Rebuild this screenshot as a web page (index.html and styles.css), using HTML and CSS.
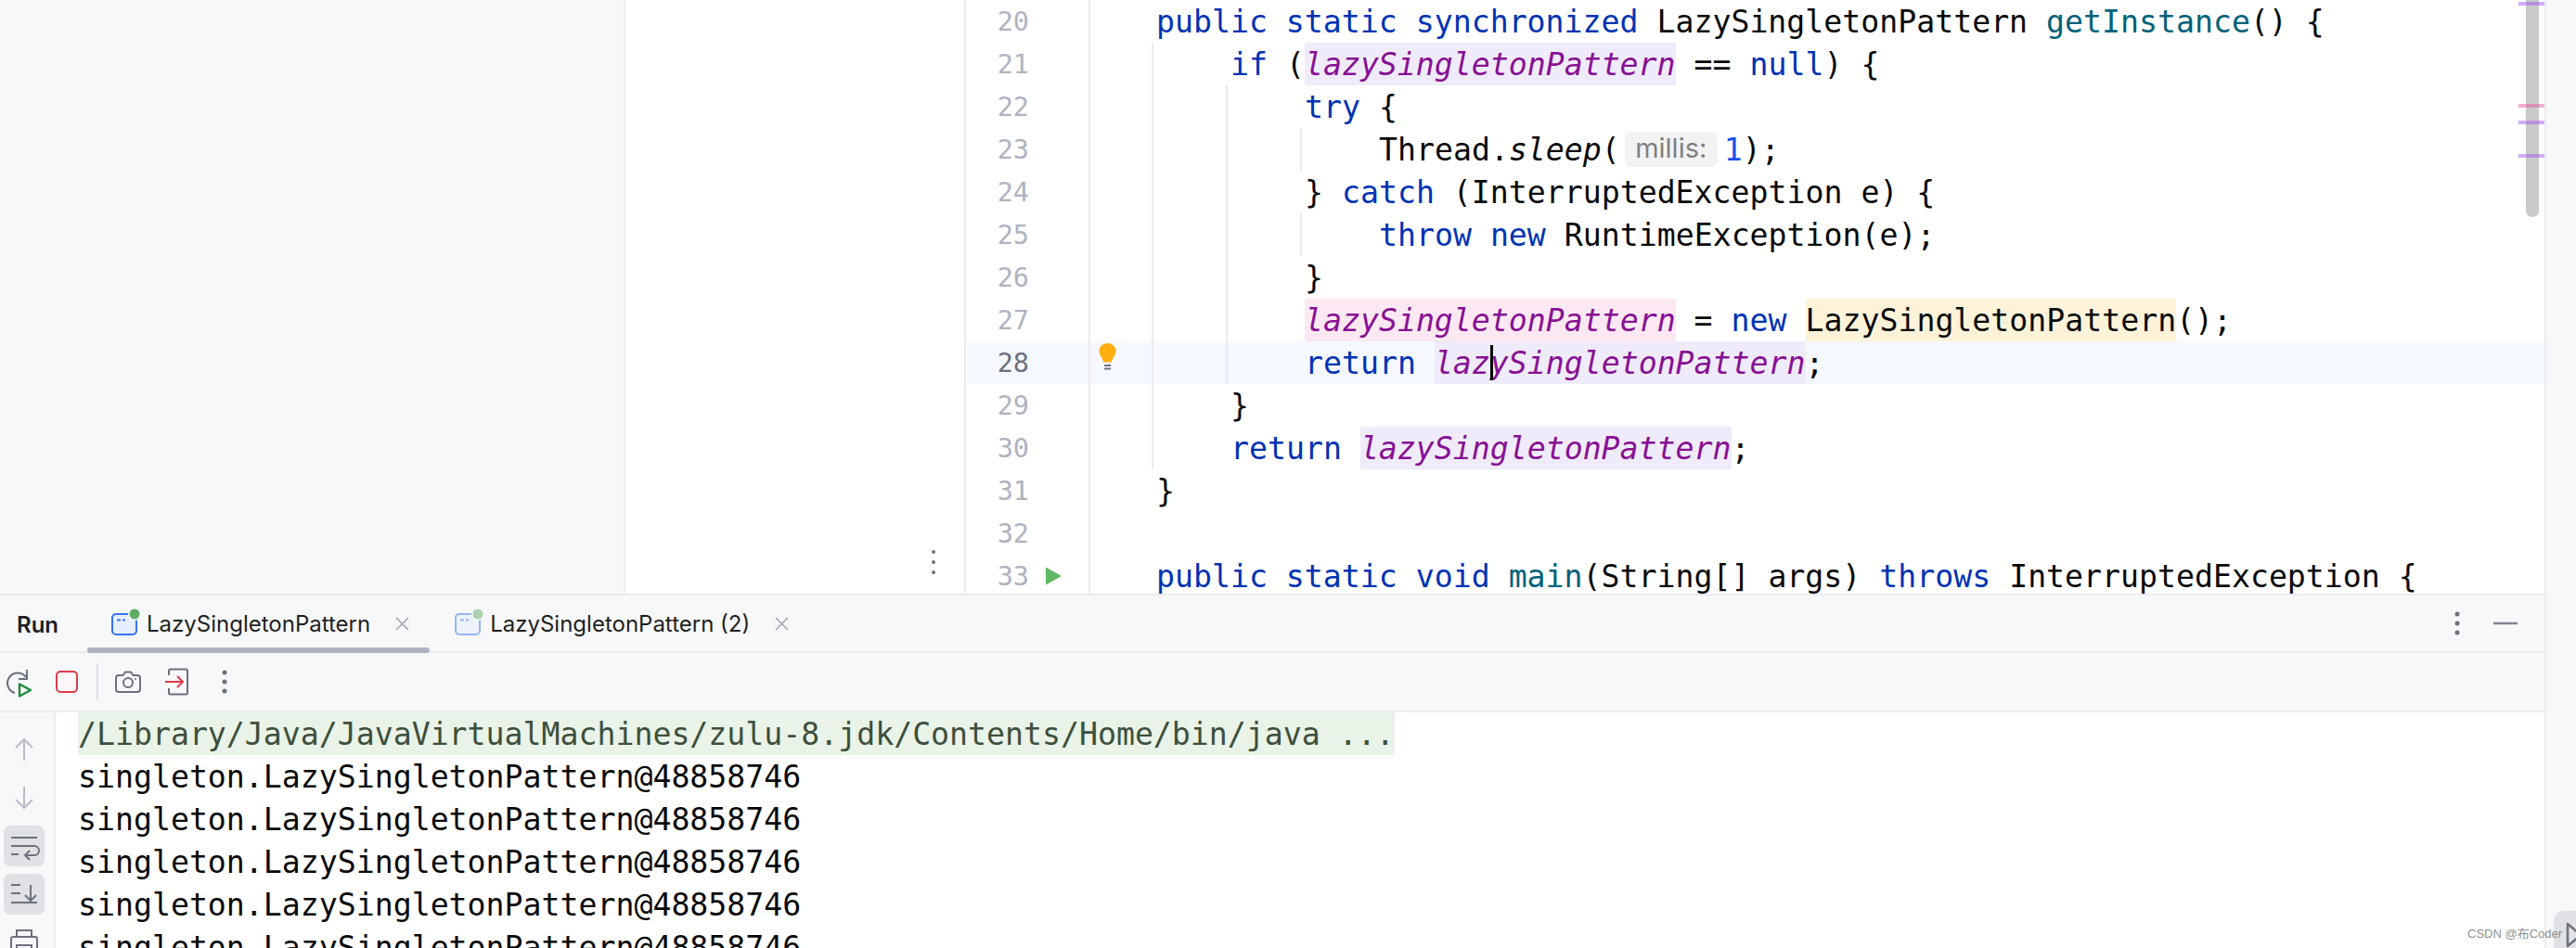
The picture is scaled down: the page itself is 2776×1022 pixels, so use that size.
FILE: index.html
```html
<!DOCTYPE html>
<html lang="en">
<head>
<meta charset="utf-8">
<title>LazySingletonPattern</title>
<link rel="stylesheet" href="styles.css">
</head>
<body>
<div class="workspace">
  <div class="top">
    <aside class="sidebar"></aside>
    <div class="structure">
      <svg class="more-dots" width="6" height="30" viewBox="0 0 6 30"><circle cx="3" cy="3" r="2" /><circle cx="3" cy="14" r="2" /><circle cx="3" cy="25" r="2" /></svg>
    </div>
    <main class="editor">
      <div class="row"><span class="ln">20</span><span class="runcell"></span><span class="fold"></span><span class="code"><b class="k">public static synchronized</b> LazySingletonPattern <span class="m">getInstance</span>() {</span></div>
      <div class="row"><span class="ln">21</span><span class="runcell"></span><span class="fold"></span><span class="code"><i class="g"></i><b class="k">if</b> (<span class="f hl-read">lazySingletonPattern</span> == <b class="k">null</b>) {</span></div>
      <div class="row"><span class="ln">22</span><span class="runcell"></span><span class="fold"></span><span class="code"><i class="g"></i><i class="g"></i><b class="k">try</b> {</span></div>
      <div class="row"><span class="ln">23</span><span class="runcell"></span><span class="fold"></span><span class="code"><i class="g"></i><i class="g"></i><i class="g"></i>Thread.<em>sleep</em>(<span class="inlay">millis:</span><span class="n">1</span>);</span></div>
      <div class="row"><span class="ln">24</span><span class="runcell"></span><span class="fold"></span><span class="code"><i class="g"></i><i class="g"></i>} <b class="k">catch</b> (InterruptedException e) {</span></div>
      <div class="row"><span class="ln">25</span><span class="runcell"></span><span class="fold"></span><span class="code"><i class="g"></i><i class="g"></i><i class="g"></i><b class="k">throw new</b> RuntimeException(e);</span></div>
      <div class="row"><span class="ln">26</span><span class="runcell"></span><span class="fold"></span><span class="code"><i class="g"></i><i class="g"></i>}</span></div>
      <div class="row"><span class="ln">27</span><span class="runcell"></span><span class="fold"></span><span class="code"><i class="g"></i><i class="g"></i><span class="f hl-write">lazySingletonPattern</span> = <b class="k">new</b> <span class="hl-ctor">LazySingletonPattern</span>();</span></div>
      <div class="row current"><span class="ln">28</span><span class="runcell"></span><span class="fold"><svg width="20" height="30" viewBox="0 0 20 30"><path class="bulb" d="M9.500 1C4.500 1 .5 5 .5 9.500c0 4.500 3.500 6.500 4.500 12h9c1-5.500 4.500-7.500 4.500-12C18.500 5 14.500 1 9.500 1z"/><path class="bulb-base" d="M6 25h7M6 28.500h7"/></svg></span><span class="code"><i class="g"></i><i class="g"></i><b class="k">return</b> <span class="f hl-read caret-host">lazySingletonPattern<span class="caret"></span></span>;</span></div>
      <div class="row"><span class="ln">29</span><span class="runcell"></span><span class="fold"></span><span class="code"><i class="g"></i>}</span></div>
      <div class="row"><span class="ln">30</span><span class="runcell"></span><span class="fold"></span><span class="code"><i class="g"></i><b class="k">return</b> <span class="f hl-read">lazySingletonPattern</span>;</span></div>
      <div class="row"><span class="ln">31</span><span class="runcell"></span><span class="fold"></span><span class="code">}</span></div>
      <div class="row"><span class="ln">32</span><span class="runcell"></span><span class="fold"></span><span class="code"></span></div>
      <div class="row"><span class="ln">33</span><span class="runcell"><svg width="20" height="22" viewBox="0 0 20 22"><path class="play" d="M1 1.500L18 11 1 20.500z"/></svg></span><span class="fold"></span><span class="code"><b class="k">public static void</b> <span class="m">main</span>(String[] args) <b class="k">throws</b> InterruptedException {</span></div>
    </main>
  </div>
  <section class="run">
    <header class="tabs">
      <span class="run-title">Run</span>
      <div class="tab active">
        <svg class="tab-icon" width="32" height="32" viewBox="0 0 32 32"><rect x="1" y="7" width="26" height="22" rx="4"/><path d="M6 13.500h4M12 13.500h3"/><circle class="halo" cx="25" cy="7" r="7"/><circle class="dot" cx="25" cy="7" r="5.500"/></svg>
        <span class="tab-label">LazySingletonPattern</span>
        <svg class="close" width="15" height="15" viewBox="0 0 15 15"><path d="M1 1l13 13M14 1L1 14"/></svg>
      </div>
      <div class="tab inactive">
        <svg class="tab-icon" width="32" height="32" viewBox="0 0 32 32"><rect x="1" y="7" width="26" height="22" rx="4"/><path d="M6 13.500h4M12 13.500h3"/><circle class="halo" cx="25" cy="7" r="7"/><circle class="dot" cx="25" cy="7" r="5.500"/></svg>
        <span class="tab-label">LazySingletonPattern (2)</span>
        <svg class="close" width="15" height="15" viewBox="0 0 15 15"><path d="M1 1l13 13M14 1L1 14"/></svg>
      </div>
      <div class="tab-actions">
        <svg width="10" height="30" viewBox="0 0 10 30"><circle class="solid" cx="5" cy="5" r="2.500"/><circle class="solid" cx="5" cy="15" r="2.500"/><circle class="solid" cx="5" cy="25" r="2.500"/></svg>
        <svg width="26" height="30" viewBox="0 0 26 30"><path class="line" d="M0 15h26"/></svg>
      </div>
    </header>
    <div class="toolbar">
      <svg class="tool" viewBox="0 0 40 40"><path class="gray" d="M28 15A11 11 0 1 0 16 32M29 7v10h-9"/><path class="green" d="M21 22.500l12 6.500-12 6.500z"/></svg>
      <svg class="tool" viewBox="0 0 40 40"><rect class="red-fill" x="9" y="9" width="22" height="22" rx="4"/></svg>
      <span class="sep"></span>
      <svg class="tool" viewBox="0 0 40 40"><path class="gray" d="M10 13h4.500l2.500-3.500h6l2.500 3.500H30a3 3 0 0 1 3 3v12a3 3 0 0 1-3 3H10a3 3 0 0 1-3-3V16a3 3 0 0 1 3-3z"/><circle class="gray" cx="20" cy="21" r="5"/><circle class="solid" cx="28" cy="17" r="1"/></svg>
      <svg class="tool" viewBox="0 0 40 40"><path class="gray" d="M12 13V8a1.500 1.500 0 0 1 1.500-1.500h17A1.500 1.500 0 0 1 32 8v24a1.500 1.500 0 0 1-1.500 1.500h-17A1.500 1.500 0 0 1 12 32v-5"/><path class="red" d="M8 20h19M21 14l6 6-6 6"/></svg>
      <svg class="tool" viewBox="0 0 40 40"><circle class="solid" cx="20" cy="10" r="2.500"/><circle class="solid" cx="20" cy="20" r="2.500"/><circle class="solid" cx="20" cy="30" r="2.500"/></svg>
    </div>
    <div class="console-wrap">
      <nav class="strip">
        <svg class="strip-btn" viewBox="0 0 44 44"><path class="light" d="M22 34V12M13 20l9-9 9 9"/></svg>
        <svg class="strip-btn" viewBox="0 0 44 44"><path class="light" d="M22 10v22M13 24l9 9 9-9"/></svg>
        <svg class="strip-btn on" viewBox="0 0 44 44"><path class="gray" d="M8 13h28M8 22h25a4.500 4.500 0 0 1 0 10H24M8 31h8M28 27l-5 5 5 5"/></svg>
        <svg class="strip-btn on" viewBox="0 0 44 44"><path class="gray" d="M8 12h10M8 21h10M8 31h28M29 12v17M23 23l6 6 6-6"/></svg>
        <svg class="strip-btn" viewBox="0 0 44 44"><path class="gray" d="M14 16V9h16v7M12 32H10a2 2 0 0 1-2-2V18a2 2 0 0 1 2-2h24a2 2 0 0 1 2 2v12a2 2 0 0 1-2 2h-2M14 25h16v11H14z"/></svg>
      </nav>
      <div class="console">
        <div class="out"><span class="sys">/Library/Java/JavaVirtualMachines/zulu-8.jdk/Contents/Home/bin/java ...</span></div>
        <div class="out">singleton.LazySingletonPattern@48858746</div>
        <div class="out">singleton.LazySingletonPattern@48858746</div>
        <div class="out">singleton.LazySingletonPattern@48858746</div>
        <div class="out">singleton.LazySingletonPattern@48858746</div>
        <div class="out">singleton.LazySingletonPattern@48858746</div>
      </div>
    </div>
  </section>
</div>
<aside class="rail">
  <div class="scrollbar"></div>
  <div class="rail-btn"><svg width="14" height="28" viewBox="0 0 14 28"><path d="M2 2l14 12L2 26z"/></svg></div>
</aside>
<div class="marks">
  <span class="mark read m1"></span>
  <span class="mark write m2"></span>
  <span class="mark read m3"></span>
  <span class="mark read m4"></span>
</div>
<span class="watermark">CSDN @布Coder</span>
</body>
</html>
```
FILE: styles.css
```css
* { box-sizing: border-box; }
html, body { margin: 0; height: 1022px; overflow: hidden; }
body {
  position: relative;
  display: flex;
  background: #fff;
  color: #000;
  font-family: "Inter", "Liberation Sans", sans-serif;
}
svg { display: block; fill: none; }

.workspace { width: 2742px; height: 1022px; display: flex; flex-direction: column; }
.top { height: 640px; display: flex; overflow: hidden; }
.sidebar { width: 674px; background: #f7f8fa; border-right: 2px solid #ebecf0; }
.structure { width: 365px; display: flex; justify-content: flex-end; align-items: flex-end; padding: 0 30px 18px 0; }
.more-dots circle { fill: #6c707e; }

.editor { flex: 1; border-left: 2px solid #ebecf0; min-width: 0; }
.row { display: flex; height: 46px; }
.row.current { background: #f5f8fe; }
.ln {
  width: 68px;
  text-align: right;
  font: 28.5px/48px "DejaVu Sans Mono", monospace;
  color: #aeb3c2;
}
.current .ln { color: #6c707e; }
.runcell { width: 66px; padding: 12px 0 0 17px; border-right: 2px solid #ebecf0; }
.fold { width: 71px; padding: 1px 0 0 9px; }
.code {
  flex: 1;
  white-space: pre;
  font: 33.2px/48px "DejaVu Sans Mono", monospace;
  color: #080808;
}
.code b { font-weight: 400; }
.k { color: #0033b3; }
.m { color: #00627a; }
.n { color: #1750eb; }
.f { color: #871094; font-style: italic; }
.code em { font-style: italic; }
.g { display: inline-block; width: 80px; height: 46px; vertical-align: top; position: relative; }
.g::before { content: ""; position: absolute; left: -5px; top: 0; bottom: 0; width: 2px; background: #ebecf0; }
.hl-read, .hl-write, .hl-ctor { display: inline-block; height: 46px; vertical-align: top; }
.hl-read { background: #efebfa; }
.hl-write { background: #fce8f3; }
.hl-ctor { background: #fdf3d9; }
.caret-host { position: relative; }
.caret { position: absolute; left: 60px; top: 4px; width: 3px; height: 38px; background: #000; }
.inlay {
  display: inline-block;
  margin: 4px 7px 0 5px;
  width: 100px;
  height: 38px;
  text-align: center;
  font: 29px/36px "Inter", "Liberation Sans", sans-serif;
  color: #7f7f7f;
  background: #f2f2f3;
  border-radius: 7px;
  vertical-align: top;
}
.bulb { fill: #ffaf0f; }
.bulb-base { stroke: #6c707e; stroke-width: 2; }
.play { fill: #5fb865; }

.run { flex: 1; display: flex; flex-direction: column; min-height: 0; border-top: 2px solid #ebecf0; }
.tabs {
  height: 62px;
  display: flex;
  background: #f7f8fa;
  border-bottom: 2px solid #ebecf0;
  color: #1e1f22;
  font-size: 24px;
  line-height: 60px;
}
.run-title { width: 94px; padding: 2px 0 0 18px; line-height: 60px; font-weight: 600; }
.tab { display: flex; align-items: center; position: relative; padding: 0 22px 0 26px; }
.tab.inactive { margin-left: 1px; }
.tab.active::after {
  content: "";
  position: absolute;
  left: 0; right: 0; bottom: -2px;
  height: 6px;
  border-radius: 3px;
  background: #aeb3c2;
}
.tab-label { margin-top: 2px; }
.tab-icon { margin: 0 6px 0 0; position: relative; top: -1px; }
.tab-icon rect { stroke: #3574f0; stroke-width: 2; fill: #e7effd; }
.tab-icon path { stroke: #3574f0; stroke-width: 2; }
.tab-icon .halo { fill: #f7f8fa; }
.tab-icon .dot { fill: #5fad65; }
.inactive .tab-icon { opacity: .5; }
.close { margin-left: 27px; }
.close path { stroke: #a0a3ad; stroke-width: 1.500; }
.tab-actions { margin-left: auto; display: flex; align-items: center; gap: 34px; padding-right: 29px; }
.solid { fill: #6c707e; }
.line { stroke: #818594; stroke-width: 2.500; }

.toolbar {
  height: 64px;
  display: flex;
  align-items: center;
  gap: 12px;
  background: #f7f8fa;
  border-bottom: 2px solid #ebecf0;
}
.tool { width: 40px; height: 40px; }
.sep { width: 2px; height: 40px; background: #dfe1e5; }
.gray { stroke: #6c707e; stroke-width: 2; fill: none; }
.green { stroke: #208a3c; stroke-width: 2.400; stroke-linejoin: round; fill: #f7f8fa; }
.red { stroke: #db3b4b; stroke-width: 2; fill: none; }
.red-fill { stroke: #db3b4b; stroke-width: 2; fill: #fff7f7; }
.light { stroke: #b9bcc6; stroke-width: 2; }

.console-wrap { flex: 1; display: flex; min-height: 0; overflow: hidden; }
.strip {
  width: 60px;
  flex: none;
  display: flex;
  flex-direction: column;
  gap: 8px;
  padding: 18px 0 0 4px;
  background: #f7f8fa;
  border-right: 2px solid #ebecf0;
}
.strip-btn { width: 44px; height: 44px; flex: none; border-radius: 7px; }
.strip-btn.on { background: #dfe1e5; }
.console { padding-left: 24px; font: 33.2px/48px "DejaVu Sans Mono", monospace; color: #080808; }
.out { height: 46px; white-space: pre; }
.sys { display: inline-block; height: 46px; vertical-align: top; color: #3d4f3d; background: #e9f3e7; }

.rail {
  width: 34px;
  height: 1022px;
  display: flex;
  align-items: flex-end;
  justify-content: flex-end;
  background: #f7f8fa;
  border-left: 2px solid #ebecf0;
}
.rail-btn { width: 24px; height: 40px; background: #dfe1e5; border-top-left-radius: 10px; padding: 12px 0 0 13px; overflow: hidden; }
.rail-btn svg { overflow: hidden; }
.rail-btn path { stroke: #6c707e; stroke-width: 2.500; stroke-linejoin: round; }

.scrollbar {
  position: absolute;
  left: 2722px; top: 0;
  width: 14px; height: 234px;
  background: #c9c9c9;
  border-radius: 0 0 7px 7px;
}
.marks { position: absolute; left: 2714px; top: 0; width: 28px; height: 240px; }
.mark { position: absolute; left: 0; width: 28px; height: 4px; }
.mark.read { background: rgba(165, 90, 240, .5); }
.mark.write { background: rgba(230, 90, 170, .5); }
.m1 { top: 2px; }
.m2 { top: 112px; }
.m3 { top: 130px; }
.m4 { top: 166px; }
.watermark {
  position: absolute;
  left: 2659px; top: 999px;
  font: 13px/16px "Liberation Sans", "Noto Sans CJK SC", sans-serif;
  color: rgba(110, 110, 110, .8);
  white-space: nowrap;
}
```
